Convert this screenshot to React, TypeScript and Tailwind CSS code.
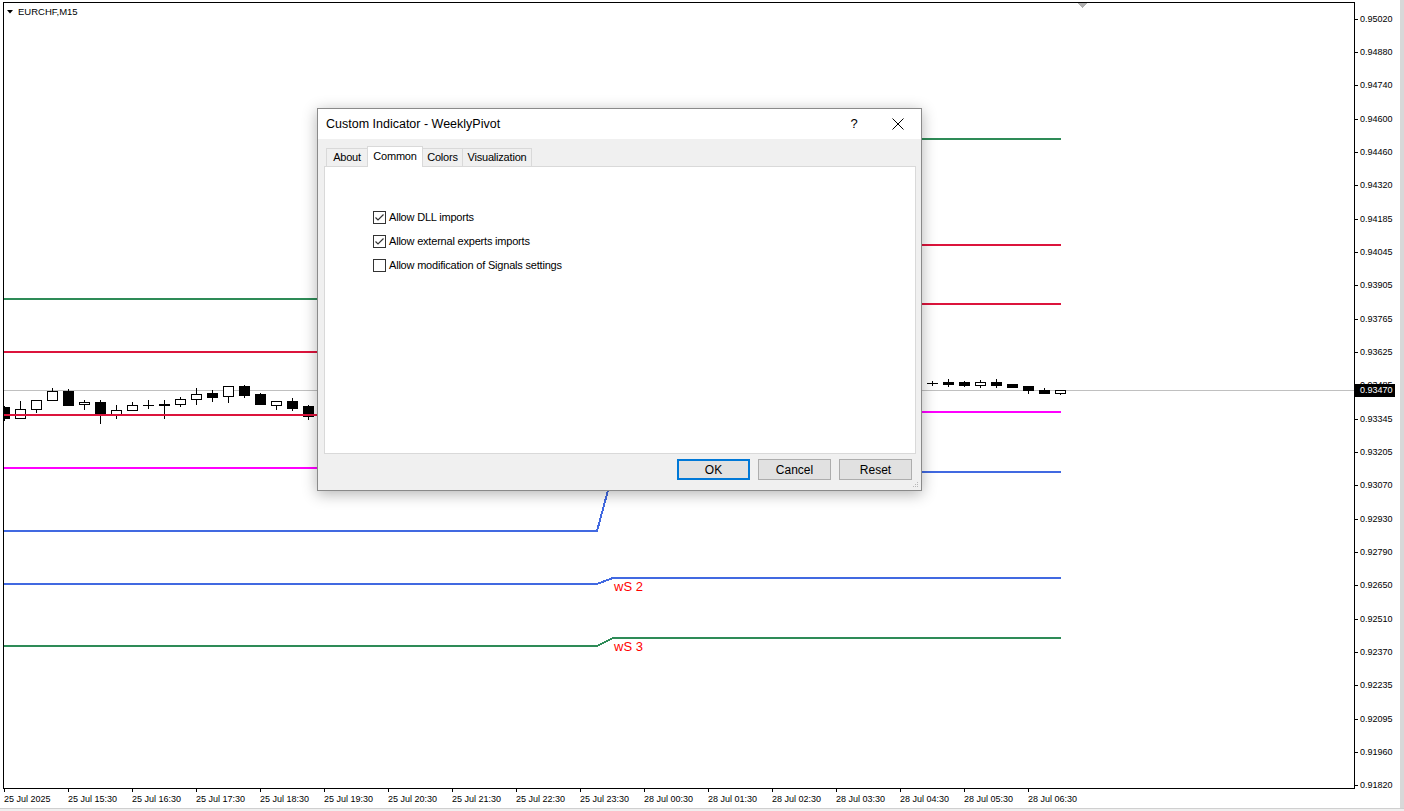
type Candle = [number, number, number, number, number, 'u' | 'd'];

// center x, body top, body bottom, high, low, direction
const candles: Candle[] = [
  [4, 407, 418, 406, 420, 'd'],
  [20, 409, 418, 401, 418, 'u'],
  [36, 400, 409, 400, 412, 'u'],
  [52, 391, 400, 388, 400, 'u'],
  [68, 391, 405, 389, 405, 'd'],
  [84, 402, 404, 400, 409, 'u'],
  [100, 402, 415, 400, 423, 'd'],
  [116, 410, 415, 405, 418, 'u'],
  [132, 405, 410, 402, 410, 'u'],
  [148, 405, 405, 400, 408, 'd'],
  [164, 404, 405, 400, 418, 'd'],
  [180, 399, 404, 397, 406, 'u'],
  [196, 394, 399, 388, 404, 'u'],
  [212, 393, 397, 390, 401, 'd'],
  [228, 386, 396, 386, 402, 'u'],
  [244, 386, 395, 385, 397, 'd'],
  [260, 394, 404, 393, 404, 'd'],
  [276, 401, 405, 401, 409, 'u'],
  [292, 401, 408, 398, 410, 'd'],
  [308, 406, 416, 405, 419, 'd'],
  [932, 383, 383, 381, 385, 'd'],
  [948, 382, 384, 379, 386, 'd'],
  [964, 382, 385, 381, 386, 'd'],
  [980, 382, 385, 380, 387, 'u'],
  [996, 382, 385, 379, 387, 'd'],
  [1012, 384, 387, 384, 387, 'd'],
  [1028, 386, 390, 386, 393, 'd'],
  [1044, 390, 393, 388, 393, 'd'],
  [1060, 390, 393, 390, 394, 'u'],
];

// weekly pivot levels: last week (left) and this week (right)
const levels = [
  { color: '#2e8b57', left: 299, right: 139 },
  { color: '#dc143c', left: 352, right: 245 },
  { color: '#dc143c', left: 415, right: 304 },
  { color: '#ff00ff', left: 468, right: 412 },
  { color: '#4169e1', left: 531, right: 472 },
  { color: '#4169e1', left: 584, right: 578, label: 'wS 2' },
  { color: '#2e8b57', left: 646, right: 638, label: 'wS 3' },
];

const prices = [
  '0.95020', '0.94880', '0.94740', '0.94600', '0.94460', '0.94320', '0.94185', '0.94045',
  '0.93905', '0.93765', '0.93625', '0.93485', '0.93345', '0.93205', '0.93070', '0.92930',
  '0.92790', '0.92650', '0.92510', '0.92370', '0.92235', '0.92095', '0.91960', '0.91820',
];

const times = [
  '25 Jul 2025', '25 Jul 15:30', '25 Jul 16:30', '25 Jul 17:30', '25 Jul 18:30', '25 Jul 19:30',
  '25 Jul 20:30', '25 Jul 21:30', '25 Jul 22:30', '25 Jul 23:30', '28 Jul 00:30', '28 Jul 01:30',
  '28 Jul 02:30', '28 Jul 03:30', '28 Jul 04:30', '28 Jul 05:30', '28 Jul 06:30',
];

function ChartCanvas() {
  return (
    <div className="relative w-[1352px] h-[787px] border border-black bg-white">
      <svg width={1350} height={785} viewBox="4 3 1350 785" className="block" shapeRendering="crispEdges">
        {/* current bid line */}
        <line x1={4} y1={390.5} x2={1354} y2={390.5} stroke="#c0c0c0" strokeWidth={1} />

        {candles.map(([x, top, bot, hi, lo, dir], i) => (
          <g key={i}>
            {lo > hi && <line x1={x + 0.5} y1={hi} x2={x + 0.5} y2={lo + 1} stroke="#000" strokeWidth={1} />}
            {top === bot ? (
              <rect x={x - 5} y={top} width={11} height={1} fill="#000" />
            ) : dir === 'd' ? (
              <rect x={x - 5} y={top} width={11} height={bot - top + 1} fill="#000" />
            ) : (
              <rect x={x - 4.5} y={top + 0.5} width={10} height={bot - top} fill="#fff" stroke="#000" strokeWidth={1} />
            )}
          </g>
        ))}

        {levels.map((lv, i) => (
          <g key={i}>
            <polyline
              points={`4,${lv.left} 597,${lv.left} 613,${lv.right} 1061,${lv.right}`}
              fill="none"
              stroke={lv.color}
              strokeWidth={2}
            />
            {lv.label && (
              <text x={614} y={lv.right + 13} fill="#ff0000" fontSize={13} fontFamily="Liberation Sans, Arial, sans-serif" shapeRendering="auto">
                {lv.label}
              </text>
            )}
          </g>
        ))}

        {/* chart shift marker */}
        <polygon points="1078,3 1087,3 1082.5,8" fill="#b0b0b0" />
      </svg>

      {/* symbol caption */}
      <div className="absolute left-[3px] top-[3px] flex items-center gap-[5px] text-[9.5px] leading-[12px]">
        <svg width={6} height={4} viewBox="0 0 6 4">
          <polygon points="0,0 6,0 3,3.5" fill="#000" />
        </svg>
        <span>EURCHF,M15</span>
      </div>
    </div>
  );
}

function TimeAxis() {
  return (
    <div className="flex h-[19px] pl-px">
      {times.map((t) => (
        <div key={t} className="w-[64px] flex flex-col">
          <div className="w-px h-[3px] bg-black" />
          <span className="mt-[2px] text-[9px] leading-[10px] whitespace-nowrap">{t}</span>
        </div>
      ))}
    </div>
  );
}

function PriceAxis() {
  return (
    <div className="relative w-[45px] h-[808px] overflow-hidden">
      <div className="flex flex-col justify-between h-[779px] mt-[13px]">
        {prices.map((p) => (
          <div key={p} className="flex items-center h-[12px]">
            <div className="w-[3px] h-px bg-black" />
            <span className="ml-[2px] text-[9px] leading-none">{p}</span>
          </div>
        ))}
      </div>
      {/* current price tag, covers the 0.93485 level like the terminal does */}
      <div className="absolute left-0 top-[384px] w-[40px] h-[13px] bg-black text-white text-[9px] leading-[13px] pl-[5px]">
        0.93470
      </div>
    </div>
  );
}

function Checkbox({ checked, label }: { checked: boolean; label: string }) {
  return (
    <div className="flex items-center h-[24px] gap-[3px]">
      <div className="w-[13px] h-[13px] border border-[#333] bg-white flex items-center justify-center">
        {checked && (
          <svg width={11} height={11} viewBox="0 0 11 11">
            <polyline points="1.5,5.5 4,8 9.5,2.5" fill="none" stroke="#333" strokeWidth={1.2} />
          </svg>
        )}
      </div>
      <span className="text-[11px] tracking-[-0.2px]">{label}</span>
    </div>
  );
}

function IndicatorDialog() {
  const tabs = [
    { name: 'About', w: 'w-[42px]' },
    { name: 'Common', w: 'w-[56px]', active: true },
    { name: 'Colors', w: 'w-[41px]' },
    { name: 'Visualization', w: 'w-[70px]' },
  ];

  return (
    <div className="absolute left-[317px] top-[108px] w-[605px] h-[383px] border border-[#8a8a8a] bg-[#f0f0f0] shadow-[0_3px_14px_rgba(0,0,0,0.3)] flex flex-col">
      {/* Title bar */}
      <div className="h-[30px] bg-white flex items-center shrink-0">
        <span className="pl-[8px] text-[12.5px] flex-1">Custom Indicator - WeeklyPivot</span>
        <div className="w-[44px] h-[30px] flex items-center justify-center text-[13px]">?</div>
        <div className="w-[44px] h-[30px] mr-px flex items-center justify-center">
          <svg width={12} height={12} viewBox="0 0 12 12">
            <path d="M0.5 0.5 L11.5 11.5 M11.5 0.5 L0.5 11.5" stroke="#000" strokeWidth={1} fill="none" />
          </svg>
        </div>
      </div>

      {/* Body */}
      <div className="flex flex-col px-[6px] pt-[7px]">
        <div className="flex items-end h-[20px] pl-[2px] text-[11px] tracking-[-0.2px]">
          {tabs.map((t) =>
            t.active ? (
              <div
                key={t.name}
                className={`${t.w} h-[21px] -mb-px -ml-px relative z-10 bg-white border border-b-0 border-[#d9d9d9] flex items-center justify-center pb-[2px]`}
              >
                {t.name}
              </div>
            ) : (
              <div
                key={t.name}
                className={`${t.w} h-[18px] -ml-px first:ml-0 bg-[#f0f0f0] border border-b-0 border-[#d9d9d9] flex items-center justify-center`}
              >
                {t.name}
              </div>
            ),
          )}
        </div>

        <div className="w-[592px] h-[288px] border border-[#d9d9d9] bg-white pl-[48px] pt-[38px]">
          <Checkbox checked label="Allow DLL imports" />
          <Checkbox checked label="Allow external experts imports" />
          <Checkbox checked={false} label="Allow modification of Signals settings" />
        </div>

        <div className="flex justify-end gap-[8px] pr-[3px] mt-[5px] text-[12px]">
          <button className="w-[73px] h-[21px] bg-[#e1e1e1] border-2 border-[#0078d7]">OK</button>
          <button className="w-[73px] h-[21px] bg-[#e1e1e1] border border-[#adadad]">Cancel</button>
          <button className="w-[73px] h-[21px] bg-[#e1e1e1] border border-[#adadad]">Reset</button>
        </div>
      </div>

      {/* size grip */}
      <svg className="absolute right-[2px] bottom-[2px]" width={7} height={7} viewBox="0 0 7 7">
        <rect x={5} y={1} width={1} height={1} fill="#b8b8b8" />
        <rect x={3} y={3} width={1} height={1} fill="#b8b8b8" />
        <rect x={5} y={3} width={1} height={1} fill="#b8b8b8" />
        <rect x={1} y={5} width={1} height={1} fill="#b8b8b8" />
        <rect x={3} y={5} width={1} height={1} fill="#b8b8b8" />
        <rect x={5} y={5} width={1} height={1} fill="#b8b8b8" />
      </svg>
    </div>
  );
}

export default function App() {
  return (
    <div className="relative w-[1404px] h-[811px] overflow-hidden bg-white text-black font-['Liberation_Sans',Arial,sans-serif]">
      <div className="flex h-[808px]">
        <div className="flex flex-col pl-[3px] pt-[2px]">
          <ChartCanvas />
          <TimeAxis />
        </div>
        <PriceAxis />
        <div className="w-[4px] h-full bg-[#d8d8d8]" />
      </div>
      <div className="h-px bg-[#cfcfcf]" />
      <div className="h-[2px] bg-[#f0f0f0]" />

      <IndicatorDialog />
    </div>
  );
}
